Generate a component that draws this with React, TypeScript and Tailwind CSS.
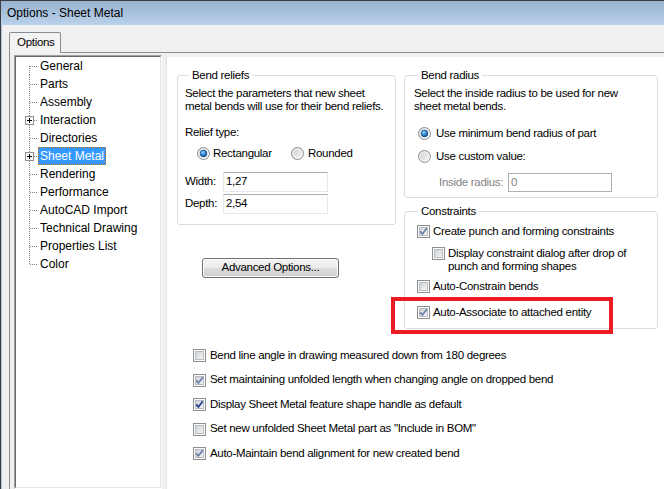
import React from 'react'

const treeItems = [
  { label: 'General' },
  { label: 'Parts' },
  { label: 'Assembly' },
  { label: 'Interaction', plus: true },
  { label: 'Directories' },
  { label: 'Sheet Metal', plus: true, selected: true },
  { label: 'Rendering' },
  { label: 'Performance' },
  { label: 'AutoCAD Import' },
  { label: 'Technical Drawing' },
  { label: 'Properties List' },
  { label: 'Color' },
]

const sheetOptions = [
  { label: 'Bend line angle in drawing measured down from 180 degrees', checked: false },
  { label: 'Set maintaining unfolded length when changing angle on dropped bend', checked: true },
  { label: 'Display Sheet Metal feature shape handle as default', checked: true, focused: true },
  { label: 'Set new unfolded Sheet Metal part as "Include in BOM"', checked: false },
  { label: 'Auto-Maintain bend alignment for new created bend', checked: true },
]

function CheckBox({ checked, focused }: { checked?: boolean; focused?: boolean }) {
  return (
    <svg width="13" height="13" viewBox="0 0 13 13" className="shrink-0">
      <defs>
        <linearGradient id="cbFill" x1="0" y1="0" x2="1" y2="1">
          <stop offset="0" stopColor="#cbcfd5" />
          <stop offset="1" stopColor="#f7f7f7" />
        </linearGradient>
      </defs>
      <rect x="0.5" y="0.5" width="12" height="12" fill="#fdfdfd" stroke="#8e8f8f" />
      <rect x="2.5" y="2.5" width="8" height="8" fill="url(#cbFill)" stroke="#b7bcc2" />
      {checked && (
        <path
          d="M3.2 6.4 L5.4 8.9 L9.8 3.2"
          fill="none"
          stroke={focused ? '#1f3d8e' : '#6a7fa8'}
          strokeWidth="1.7"
        />
      )}
    </svg>
  )
}

function Radio({ checked }: { checked?: boolean }) {
  return (
    <svg width="13" height="13" viewBox="0 0 13 13" className="shrink-0">
      <defs>
        <linearGradient id="rbFill" x1="0" y1="0" x2="1" y2="1">
          <stop offset="0" stopColor="#c9cdd3" />
          <stop offset="1" stopColor="#f8f8f8" />
        </linearGradient>
        <radialGradient id="rbDot" cx="0.4" cy="0.35" r="0.75">
          <stop offset="0" stopColor="#a8dcff" />
          <stop offset="0.45" stopColor="#2f86d6" />
          <stop offset="1" stopColor="#123f73" />
        </radialGradient>
      </defs>
      <circle cx="6.5" cy="6.5" r="6" fill="url(#rbFill)" stroke="#8e8f8f" />
      <circle cx="6.5" cy="6.5" r="4.6" fill="none" stroke="#ffffff" strokeOpacity="0.7" />
      {checked && <circle cx="6.5" cy="6.5" r="3.4" fill="url(#rbDot)" stroke="#1c4b7e" strokeWidth="0.6" />}
    </svg>
  )
}

function TreeLines({ first, last, plus }: { first?: boolean; last?: boolean; plus?: boolean }) {
  return (
    <svg width="22" height="18" viewBox="0 0 22 18" className="shrink-0">
      <line x1="13.5" y1={first ? 9 : 0} x2="13.5" y2={last ? 10 : 18} stroke="#808080" strokeDasharray="1 1" />
      <line x1="14" y1="9.5" x2="22" y2="9.5" stroke="#808080" strokeDasharray="1 1" />
      {plus && (
        <>
          <rect x="9.5" y="5.5" width="8" height="8" fill="#f7f7f7" stroke="#929292" />
          <path d="M11 9.5h5M13.5 7v5" stroke="#000" />
        </>
      )}
    </svg>
  )
}

function TreeView() {
  return (
    <div className="mt-[2px] ml-[4px] w-[148px] shrink-0 border-t border-l border-r border-b border-t-[#a0a0a0] border-l-[#a0a0a0] border-r-white border-b-white">
      <div className="h-full border-t border-l border-r border-b border-t-[#696969] border-l-[#696969] border-r-[#e3e3e3] border-b-[#e3e3e3] bg-white text-[12px] tracking-normal">
        {treeItems.map((item, i) => (
          <div key={item.label} className="flex h-[18px] items-center">
            <TreeLines first={i === 0} last={i === treeItems.length - 1} plus={item.plus} />
            <span
              className={
                item.selected
                  ? 'flex h-[18px] items-center border border-dotted border-[#c66a12] bg-[#3399ff] px-[1px] text-white'
                  : 'flex h-[18px] items-center px-[2px]'
              }
            >
              {item.label}
            </span>
          </div>
        ))}
      </div>
    </div>
  )
}

function GroupBox({ title, className, children }: { title: string; className: string; children: React.ReactNode }) {
  return (
    <fieldset className={`rounded-[3px] border border-[#d5dfe5] ${className}`}>
      <legend className="ml-[4px] px-[3px] leading-[14px]">{title}</legend>
      {children}
    </fieldset>
  )
}

function BendReliefs() {
  return (
    <GroupBox title="Bend reliefs" className="w-[219px] pl-[7px] pb-[10px]">
      <p className="mt-[5px] leading-[13px]">
        Select the parameters that new sheet
        <br />
        metal bends will use for their bend reliefs.
      </p>
      <p className="mt-[13px] leading-[13px]">Relief type:</p>
      <div className="mt-[8px] ml-[12px] flex h-[13px] items-center">
        <label className="flex w-[94px] items-center gap-[3px]">
          <Radio checked />
          <span>Rectangular</span>
        </label>
        <label className="flex items-center gap-[4px]">
          <Radio />
          <span>Rounded</span>
        </label>
      </div>
      <div className="mt-[12px] flex items-center">
        <span className="w-[38px]">Width:</span>
        <div className="flex h-[20px] w-[105px] items-center border border-[#e3e9ef] border-t-[#abadb3] bg-white pl-[2px]">
          1,27
        </div>
      </div>
      <div className="mt-[2px] flex items-center">
        <span className="w-[38px]">Depth:</span>
        <div className="flex h-[20px] w-[105px] items-center border border-[#e3e9ef] border-t-[#abadb3] bg-white pl-[2px]">
          2,54
        </div>
      </div>
    </GroupBox>
  )
}

function BendRadius() {
  return (
    <GroupBox title="Bend radius" className="w-[254px] pl-[9px] pb-[5px]">
      <p className="mt-[5px] leading-[13px]">
        Select the inside radius to be used for new
        <br />
        sheet metal bends.
      </p>
      <label className="mt-[14px] ml-[4px] flex h-[13px] items-center gap-[5px]">
        <Radio checked />
        <span>Use minimum bend radius of part</span>
      </label>
      <label className="mt-[10px] ml-[4px] flex h-[13px] items-center gap-[5px]">
        <Radio />
        <span>Use custom value:</span>
      </label>
      <div className="mt-[10px] ml-[25px] flex items-center">
        <span className="w-[69px] whitespace-nowrap text-[#838383]">Inside radius:</span>
        <div className="flex h-[19px] w-[104px] items-center border border-[#adb2b5] bg-white pl-[2px] text-[#838383]">
          0
        </div>
      </div>
    </GroupBox>
  )
}

function Constraints() {
  return (
    <GroupBox title="Constraints" className="mt-[6px] w-[254px] pl-[9px] pb-[9px]">
      <label className="mt-[7px] ml-[3px] flex h-[13px] items-center gap-[3px]">
        <CheckBox checked />
        <span>Create punch and forming constraints</span>
      </label>
      <label className="mt-[9px] ml-[18px] flex items-start gap-[3px] leading-[13px]">
        <CheckBox />
        <span>
          Display constraint dialog after drop of
          <br />
          punch and forming shapes
        </span>
      </label>
      <label className="mt-[7px] ml-[3px] flex h-[13px] items-center gap-[3px]">
        <CheckBox />
        <span>Auto-Constrain bends</span>
      </label>
      <label className="mt-[13px] ml-[3px] flex h-[13px] items-center gap-[3px]">
        <CheckBox checked />
        <span>Auto-Associate to attached entity</span>
      </label>
    </GroupBox>
  )
}

export default function App() {
  return (
    <div className="relative flex h-[489px] w-[664px] flex-col overflow-hidden border-t border-l border-[#3d3d3d] bg-[#f0f0f0] font-['Liberation_Sans',Arial,sans-serif] text-[11.5px] tracking-[-0.3px] text-black">
      <div className="flex h-[24px] shrink-0 items-center bg-[linear-gradient(to_bottom,#97b2d0,#bad2eb)] pl-[6px] text-[12px] tracking-normal text-black">
        Options - Sheet Metal
      </div>

      <div className="flex min-h-0 flex-1 flex-col border-l border-[#a9c3e0] pt-[7px] pl-[7px]">
        <div className="relative z-10 -mb-px flex h-[21px] w-[52px] items-center rounded-t-[2px] border-t border-l border-r border-[#898c95] bg-[#f3f3f3] pl-[7px]">
          Options
        </div>

        <div className="flex min-h-0 flex-1 border-t border-l border-[#898c95]">
          <TreeView />

          <div className="mt-[4px] ml-[4px] flex-1 border-l border-[#e3e3e3] bg-white pt-[11px] pl-[10px]">
            <div className="flex items-start">
              <div className="flex flex-col">
                <BendReliefs />
                <button className="mt-[33px] ml-[25px] flex h-[20px] w-[137px] items-center justify-center rounded-[3px] border border-[#707070] bg-[linear-gradient(to_bottom,#f2f2f2_0%,#ebebeb_50%,#dddddd_50%,#cfcfcf_100%)] shadow-[inset_0_0_0_1px_#fcfcfc]">
                  Advanced Options...
                </button>
              </div>
              <div className="ml-[8px] flex flex-col">
                <BendRadius />
                <Constraints />
              </div>
            </div>

            <div className="mt-[20px] ml-[16px] flex flex-col gap-[11.5px]">
              {sheetOptions.map((opt) => (
                <label key={opt.label} className="flex h-[13px] items-center gap-[4px]">
                  <CheckBox checked={opt.checked} focused={opt.focused} />
                  <span className="whitespace-nowrap">{opt.label}</span>
                </label>
              ))}
            </div>
          </div>
        </div>
      </div>

      <div className="absolute top-[296px] left-[390px] h-[37px] w-[222px] border-[4px] border-[#ec1c24]" />
    </div>
  )
}
